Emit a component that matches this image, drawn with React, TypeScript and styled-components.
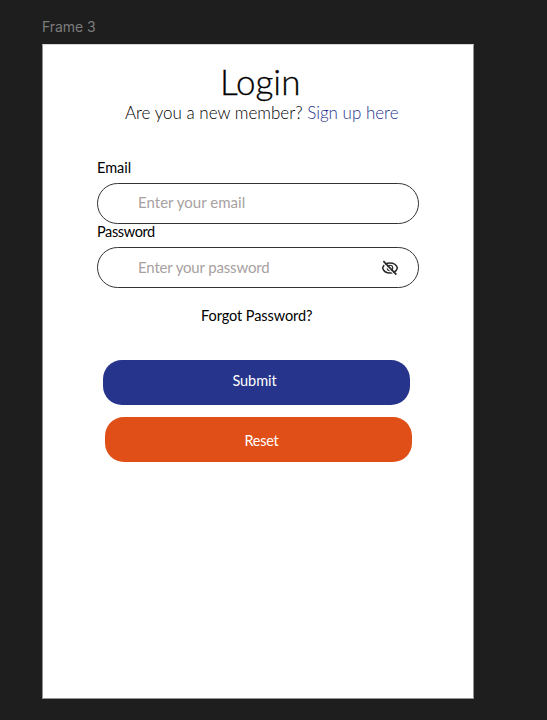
import React from "react";
import styled, { createGlobalStyle } from "styled-components";

const GlobalStyle = createGlobalStyle`
  *, *::before, *::after { box-sizing: border-box; }
  body { margin: 0; background: #1e1e1e; }
`;

const Canvas = styled.main`
  width: 547px;
  height: 720px;
  padding: 17px 0 0 42px;
  background: #1e1e1e;
  overflow: hidden;
  font-family: Lato, "Open Sans", sans-serif;
`;

const FrameLabel = styled.div`
  height: 27px;
  font: 400 14px/20px Inter, sans-serif;
  letter-spacing: -0.05px;
  color: #7c7c7c;
`;

const Frame = styled.section`
  display: flex;
  flex-direction: column;
  width: 432px;
  height: 655px;
  padding: 16px 55px 0;
  background: #fff;
  border: 1px solid #929292;
  border-top-color: #d8d8d8;
`;

const Title = styled.h1`
  margin: 0 0 0 122px;
  height: 40px;
  font: 300 35px/40px Lato, sans-serif;
  color: #000;
  white-space: nowrap;
  -webkit-text-stroke: 0.3px #000;
`;

const Subtitle = styled.p`
  margin: 0 0 0 27px;
  height: 58px;
  font: 300 17px/23px Lato, sans-serif;
  color: #000;
  white-space: nowrap;
`;

const SignUp = styled.a`
  color: #27348b;
`;

const Label = styled.label<{ $height: number; $line: number; $spacing: number }>`
  height: ${(p) => p.$height}px;
  margin-left: -1px;
  font-size: 14.5px;
  line-height: ${(p) => p.$line}px;
  letter-spacing: ${(p) => p.$spacing}px;
  color: #000;
`;

const Field = styled.div<{ $gap: number; $lift: number }>`
  display: flex;
  align-items: center;
  justify-content: space-between;
  width: 322px;
  height: 41px;
  margin: 0 0 ${(p) => p.$gap}px -1px;
  padding: 0 19px ${(p) => p.$lift}px 40px;
  border: 1px solid #333;
  border-radius: 20.5px;
`;

const Input = styled.input<{ $spacing: number }>`
  width: 200px;
  padding: 0;
  border: 0;
  outline: 0;
  background: transparent;
  font: 400 15px/20px Lato, sans-serif;
  letter-spacing: ${(p) => p.$spacing}px;
  color: #000;
  &::placeholder { color: #a7a1a1; opacity: 1; }
`;

const EyeIcon = styled.svg`
  width: 18px;
  height: 18px;
  margin-top: 3px;
  fill: none;
  stroke: #2b2b2b;
  stroke-width: 1.5;
`;

const Forgot = styled.a`
  margin: 1px 0 34px 103px;
  height: 20px;
  font-size: 14.5px;
  line-height: 20px;
  letter-spacing: -0.08px;
  color: #000;
  white-space: nowrap;
`;

const Button = styled.button<{ $color: string; $left: number; $pad: string; $spacing: number }>`
  flex: none;
  width: 307px;
  height: 45px;
  margin: 0 0 12px ${(p) => p.$left}px;
  padding: ${(p) => p.$pad};
  border: 0;
  border-radius: 19px;
  background: ${(p) => p.$color};
  font: 400 14.5px/20px Lato, sans-serif;
  letter-spacing: ${(p) => p.$spacing}px;
  color: #fff;
`;

export default function App() {
  return (
    <>
      <GlobalStyle />
      <Canvas>
        <FrameLabel>Frame 3</FrameLabel>
        <Frame>
          <Title>Login</Title>
          <Subtitle>
            Are you a new member? <SignUp>Sign up here</SignUp>
          </Subtitle>
          <Label htmlFor="email" $height={24} $line={17} $spacing={0}>Email</Label>
          <Field $gap={0} $lift={3}>
            <Input id="email" placeholder="Enter your email" $spacing={0.03} />
          </Field>
          <Label htmlFor="password" $height={23} $line={15} $spacing={-0.38}>Password</Label>
          <Field $gap={17} $lift={2}>
            <Input id="password" placeholder="Enter your password" $spacing={-0.16} />
            <EyeIcon viewBox="0 0 18 18" aria-hidden="true">
              <path d="M1.6 9C2.6 5.8 5.7 4 9 4S15.4 5.8 16.4 9C15.4 12.2 12.3 14 9 14S2.6 12.2 1.6 9Z" />
              <circle cx="9" cy="9" r="2.7" strokeWidth="1.1" />
              <path d="M1.6 3.6L14.2 16.4" stroke="#fff" strokeWidth="1.2" />
              <path d="M2.4 2.2L15.4 15.6" strokeWidth="1.7" />
            </EyeIcon>
          </Field>
          <Forgot>Forgot Password?</Forgot>
          <Button $color="#27348b" $left={5} $pad="0 4px 3px 0" $spacing={-0.05}>Submit</Button>
          <Button $color="#e04f17" $left={7} $pad="2px 0 0 6px" $spacing={-0.25}>Reset</Button>
        </Frame>
      </Canvas>
    </>
  );
}
